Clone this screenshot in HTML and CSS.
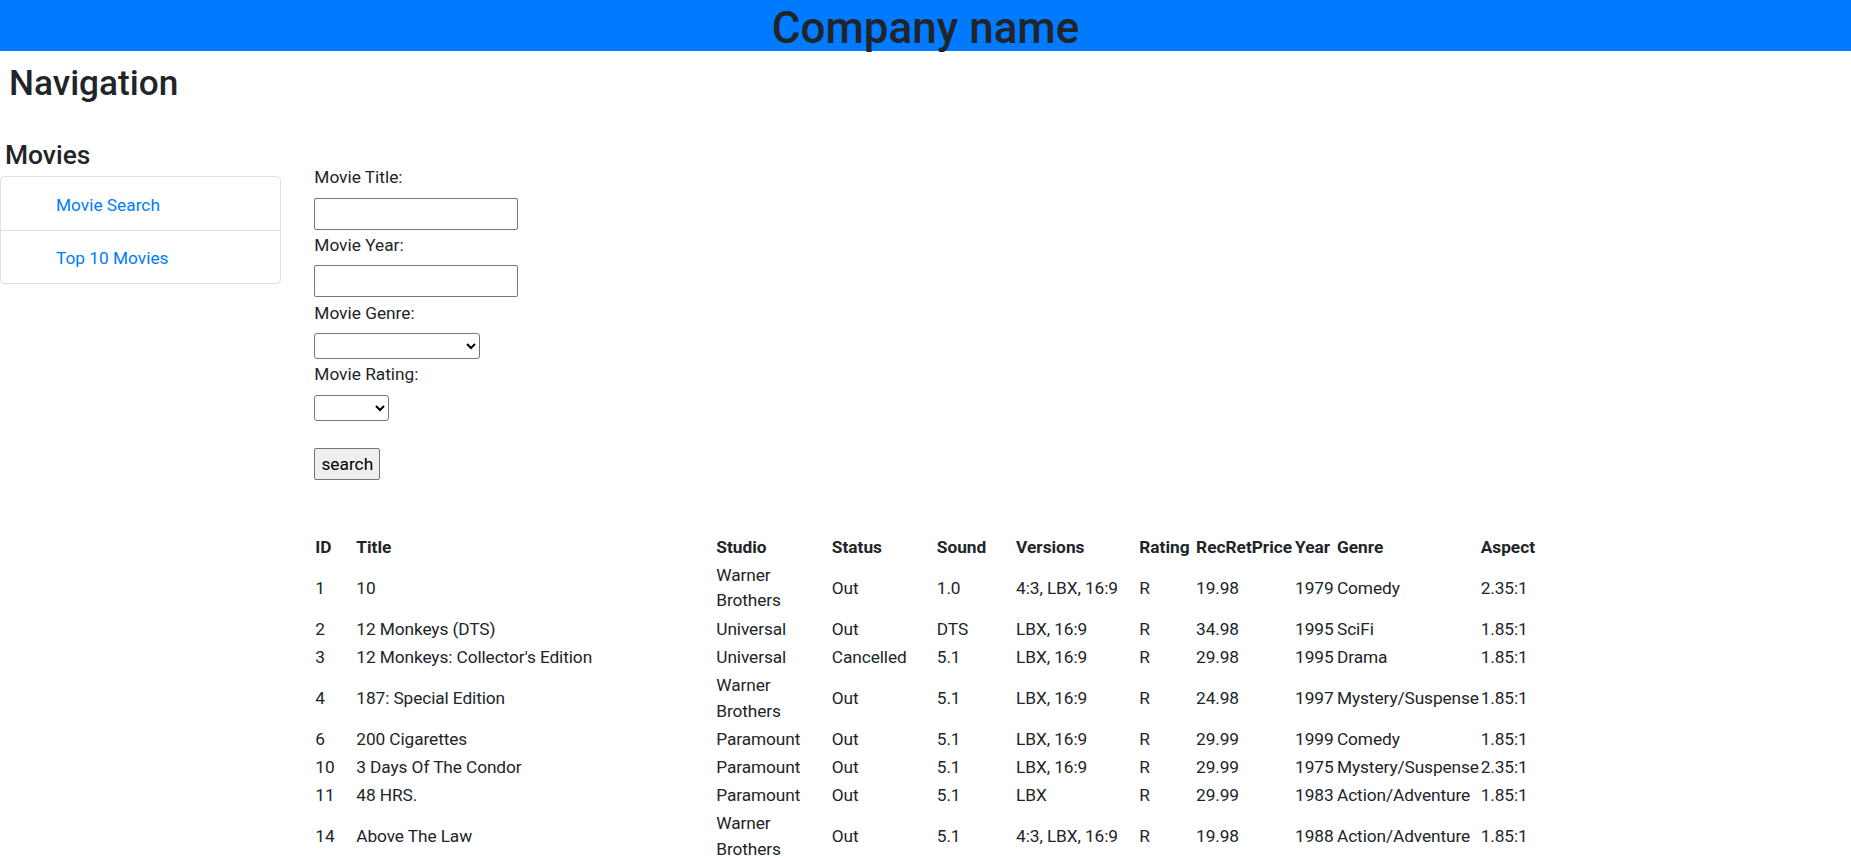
FILE: index.html
```html
<!DOCTYPE html>
<html lang="en">
<head>
<meta charset="utf-8">
<title>Movies</title>
<link rel="stylesheet" href="styles.css">
</head>
<body>
<header class="topbar">
  <h1 class="brand">Company name</h1>
</header>
<h2 class="page-title">Navigation</h2>
<div class="layout">
  <aside class="sidebar">
    <h4 class="sidebar-title">Movies</h4>
    <ul class="list-group">
      <li class="list-item"><a class="nav-link" href="#">Movie Search</a></li>
      <li class="list-item"><a class="nav-link" href="#">Top 10 Movies</a></li>
    </ul>
  </aside>
  <main class="content">
    <form class="search-form">
      <label class="field-label" for="title">Movie Title:</label>
      <input class="text-input" type="text" id="title">
      <label class="field-label" for="year">Movie Year:</label>
      <input class="text-input" type="text" id="year">
      <label class="field-label" for="genre">Movie Genre:</label>
      <select class="select-input select-genre" id="genre"><option></option></select>
      <label class="field-label" for="rating">Movie Rating:</label>
      <select class="select-input select-rating" id="rating"><option></option></select>
      <button class="search-btn" type="button">search</button>
    </form>
    <table class="movies">
      <colgroup>
        <col class="c-id"><col class="c-title"><col class="c-studio"><col class="c-status"><col class="c-sound"><col class="c-versions"><col class="c-rating"><col class="c-price"><col class="c-year"><col class="c-genre"><col class="c-aspect">
      </colgroup>
      <thead>
        <tr><th>ID</th><th>Title</th><th>Studio</th><th>Status</th><th>Sound</th><th>Versions</th><th>Rating</th><th>RecRetPrice</th><th>Year</th><th>Genre</th><th>Aspect</th></tr>
      </thead>
      <tbody>
        <tr><td>1</td><td>10</td><td class="wrap">Warner Brothers</td><td>Out</td><td>1.0</td><td>4:3, LBX, 16:9</td><td>R</td><td>19.98</td><td>1979</td><td>Comedy</td><td>2.35:1</td></tr>
        <tr><td>2</td><td>12 Monkeys (DTS)</td><td class="wrap">Universal</td><td>Out</td><td>DTS</td><td>LBX, 16:9</td><td>R</td><td>34.98</td><td>1995</td><td>SciFi</td><td>1.85:1</td></tr>
        <tr><td>3</td><td>12 Monkeys: Collector's Edition</td><td class="wrap">Universal</td><td>Cancelled</td><td>5.1</td><td>LBX, 16:9</td><td>R</td><td>29.98</td><td>1995</td><td>Drama</td><td>1.85:1</td></tr>
        <tr><td>4</td><td>187: Special Edition</td><td class="wrap">Warner Brothers</td><td>Out</td><td>5.1</td><td>LBX, 16:9</td><td>R</td><td>24.98</td><td>1997</td><td>Mystery/Suspense</td><td>1.85:1</td></tr>
        <tr><td>6</td><td>200 Cigarettes</td><td class="wrap">Paramount</td><td>Out</td><td>5.1</td><td>LBX, 16:9</td><td>R</td><td>29.99</td><td>1999</td><td>Comedy</td><td>1.85:1</td></tr>
        <tr><td>10</td><td>3 Days Of The Condor</td><td class="wrap">Paramount</td><td>Out</td><td>5.1</td><td>LBX, 16:9</td><td>R</td><td>29.99</td><td>1975</td><td>Mystery/Suspense</td><td>2.35:1</td></tr>
        <tr><td>11</td><td>48 HRS.</td><td class="wrap">Paramount</td><td>Out</td><td>5.1</td><td>LBX</td><td>R</td><td>29.99</td><td>1983</td><td>Action/Adventure</td><td>1.85:1</td></tr>
        <tr><td>14</td><td>Above The Law</td><td class="wrap">Warner Brothers</td><td>Out</td><td>5.1</td><td>4:3, LBX, 16:9</td><td>R</td><td>19.98</td><td>1988</td><td>Action/Adventure</td><td>1.85:1</td></tr>
      </tbody>
    </table>
  </main>
</div>
</body>
</html>
```
FILE: styles.css
```css
html, body {
  margin: 0;
  padding: 0;
}
body {
  font-family: Roboto, "Liberation Sans", sans-serif;
  font-size: 17.3px;
  line-height: 26.4px;
  color: #212529;
  background: #fff;
}

/* top band */
.topbar {
  background: #007bff;
  height: 51px;
  padding-top: 2px;
  box-sizing: border-box;
  text-align: center;
}
.brand {
  margin: 0;
  font-size: 44px;
  font-weight: 500;
  line-height: 52.8px;
  color: #212529;
}

.page-title {
  margin: 10.5px 0 0 9px;
  font-size: 35.2px;
  font-weight: 500;
  line-height: 42.24px;
}

.layout {
  display: flex;
  align-items: flex-start;
  gap: 33.3px;
  margin-top: 34.7px;
}

/* sidebar */
.sidebar {
  flex: none;
  width: 281px;
}
.sidebar-title {
  margin: 0 0 4.3px;
  padding: 2px 0 0 5px;
  font-size: 26.4px;
  font-weight: 500;
  line-height: 31.68px;
}
.list-group {
  list-style: none;
  margin: 0;
  padding: 0;
  border: 1px solid rgba(0, 0, 0, 0.125);
  border-radius: 4.4px;
}
.list-item {
  padding: 14.2px 0 11.8px 55px;
}
.list-item + .list-item {
  border-top: 1px solid rgba(0, 0, 0, 0.125);
}
.nav-link {
  color: #007bff;
  text-decoration: none;
}

/* content */
.content {
  flex: 1;
  min-width: 0;
  padding-top: 24.7px;
}
.search-form {
  display: flex;
  flex-direction: column;
  align-items: flex-start;
}
.field-label {
  display: block;
  padding-top: 1.2px;
  margin-bottom: 6.8px;
}
.text-input {
  box-sizing: border-box;
  width: 204px;
  height: 32px;
  margin: 0 0 1.3px;
  padding: 1px 2px;
  font: inherit;
  border: 1px solid #767676;
  border-radius: 2px;
  background: #fff;
}
.select-input {
  box-sizing: border-box;
  height: 26px;
  margin: 0 0 1.3px;
  font-family: inherit;
  font-size: 15px;
  border: 1px solid #767676;
  border-radius: 3px;
  background-color: #fff;
}
.select-genre { width: 166px; }
.select-rating { width: 75px; }
.search-btn {
  box-sizing: border-box;
  width: 66px;
  height: 32px;
  margin-top: 26px;
  padding: 0;
  font: inherit;
  color: #000;
  background: #efefef;
  border: 1px solid #767676;
  border-radius: 2px;
}

/* table */
.movies {
  margin-top: 53.5px;
  border-collapse: collapse;
  table-layout: fixed;
  width: 1225px;
}
.movies th,
.movies td {
  padding: 1.3px 1px;
  line-height: 25.6px;
  text-align: left;
  white-space: nowrap;
  vertical-align: middle;
}
.movies td {
  letter-spacing: -0.1px;
}
.movies th {
  font-weight: 700;
}
.movies td.wrap {
  white-space: normal;
}
.c-id { width: 41px; }
.c-title { width: 360px; }
.c-studio { width: 115.5px; }
.c-status { width: 105px; }
.c-sound { width: 79.3px; }
.c-versions { width: 123.2px; }
.c-rating { width: 56.8px; }
.c-price { width: 99px; }
.c-year { width: 41.9px; }
.c-genre { width: 143.7px; }
.c-aspect { width: 60px; }
```
